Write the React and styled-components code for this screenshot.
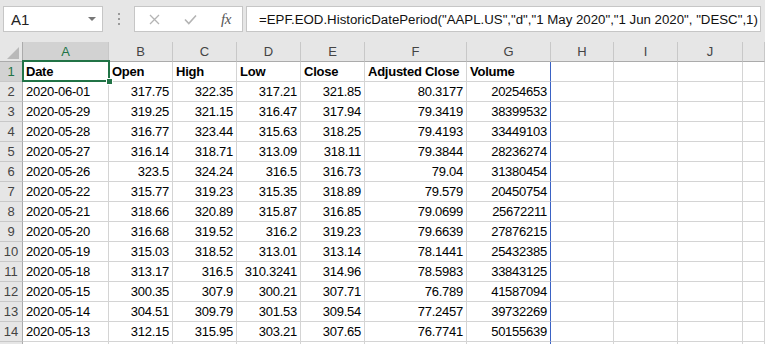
import React from "react";
import styled, { createGlobalStyle } from "styled-components";

const GlobalStyle = createGlobalStyle`
  html, body { margin: 0; padding: 0; background: #fff; overflow: hidden; }
  body { font-family: "Liberation Sans", Arial, sans-serif; }
`;

const Window = styled.div`
  width: 765px;
  height: 344px;
  overflow: hidden;
  display: flex;
  flex-direction: column;
  background: #fff;
`;

const FormulaBar = styled.div`
  flex: none;
  height: 42px;
  box-sizing: border-box;
  background: #e6e6e6;
  display: flex;
  align-items: flex-start;
  padding: 6px 4px 0 3px;
`;

const NameBox = styled.div`
  width: 100px;
  height: 26px;
  box-sizing: border-box;
  background: #fff;
  border: 1px solid #c6c6c6;
  display: flex;
  align-items: center;
  justify-content: space-between;
  padding: 0 6px 0 7px;
  font-size: 15px;
  color: #222;
`;

const DropArrow = styled.span`
  width: 0;
  height: 0;
  border-left: 4px solid transparent;
  border-right: 4px solid transparent;
  border-top: 4px solid #777;
`;

const Grip = styled.div`
  width: 31px;
  height: 26px;
  display: flex;
  flex-direction: column;
  align-items: center;
  justify-content: center;
  gap: 3px;
`;

const GripDot = styled.span`
  width: 2px;
  height: 2px;
  background: #9a9a9a;
`;

const ButtonBox = styled.div`
  width: 109px;
  height: 26px;
  box-sizing: border-box;
  background: #fff;
  border: 1px solid #c6c6c6;
  display: flex;
  align-items: center;
  padding: 0 0 0 14px;
  gap: 24px;
`;

const FxLabel = styled.span`
  font-family: "Liberation Serif", "Times New Roman", serif;
  font-style: italic;
  font-size: 15px;
  color: #555;
  letter-spacing: -0.5px;
`;

const FormulaInput = styled.div`
  flex: 1;
  margin-left: 3px;
  height: 26px;
  box-sizing: border-box;
  background: #fff;
  border: 1px solid #c6c6c6;
  display: flex;
  align-items: center;
  padding-left: 12px;
  font-size: 13.25px;
  color: #111;
  white-space: nowrap;
  overflow: hidden;
`;

const SheetArea = styled.div`
  flex: 1;
  position: relative;
  overflow: hidden;
`;

const Grid = styled.div`
  display: grid;
  grid-template-columns: 23px 86px 64px 64px 64px 64px 102px 84px 63px 64px 65px 1fr;
  grid-auto-rows: 20px;
`;

const Corner = styled.div`
  box-sizing: border-box;
  background: #e6e6e6;
  border-right: 1px solid #ababab;
  border-bottom: 1px solid #ababab;
  display: flex;
  align-items: flex-end;
  justify-content: flex-end;
  padding: 0 3px 2px 0;
`;

const CornerTriangle = styled.span`
  width: 0;
  height: 0;
  border-left: 12px solid transparent;
  border-bottom: 12px solid #b9b9b9;
`;

const ColHeader = styled.div`
  box-sizing: border-box;
  background: ${(p) => (p.$active ? "#d2d2d2" : "#e6e6e6")};
  color: ${(p) => (p.$active ? "#217346" : "#444")};
  border-right: 1px solid #c8c8c8;
  border-bottom: 1px solid #ababab;
  font-size: 13px;
  line-height: 20px;
  text-align: center;
`;

const RowHeader = styled.div`
  box-sizing: border-box;
  background: ${(p) => (p.$active ? "#d2d2d2" : "#e6e6e6")};
  color: ${(p) => (p.$active ? "#217346" : "#444")};
  border-right: 1px solid #ababab;
  border-bottom: 1px solid #c8c8c8;
  font-size: 13px;
  line-height: 20px;
  text-align: center;
`;

const Cell = styled.div`
  box-sizing: border-box;
  border-right: 1px solid ${(p) => (p.$edge ? "#3a62c4" : "#d4d4d4")};
  border-bottom: 1px solid #d4d4d4;
  font-size: 13px;
  letter-spacing: -0.25px;
  font-weight: ${(p) => (p.$bold ? 700 : 400)};
  text-align: ${(p) => (p.$num ? "right" : "left")};
  color: #000;
  padding: 0 3px;
  line-height: 20px;
  white-space: nowrap;
  overflow: hidden;
`;

const Selection = styled.div`
  position: absolute;
  left: 22px;
  top: 18px;
  width: 88px;
  height: 22px;
  box-sizing: border-box;
  border: 2px solid #217346;
  pointer-events: none;
`;

const FillHandle = styled.span`
  position: absolute;
  right: -4px;
  bottom: -4px;
  width: 5px;
  height: 5px;
  background: #217346;
  box-shadow: 0 0 0 1px #fff;
`;

const columns = ["A", "B", "C", "D", "E", "F", "G", "H", "I", "J", ""];

const header = ["Date", "Open", "High", "Low", "Close", "Adjusted Close", "Volume"];

const data = [
  ["2020-06-01", "317.75", "322.35", "317.21", "321.85", "80.3177", "20254653"],
  ["2020-05-29", "319.25", "321.15", "316.47", "317.94", "79.3419", "38399532"],
  ["2020-05-28", "316.77", "323.44", "315.63", "318.25", "79.4193", "33449103"],
  ["2020-05-27", "316.14", "318.71", "313.09", "318.11", "79.3844", "28236274"],
  ["2020-05-26", "323.5", "324.24", "316.5", "316.73", "79.04", "31380454"],
  ["2020-05-22", "315.77", "319.23", "315.35", "318.89", "79.579", "20450754"],
  ["2020-05-21", "318.66", "320.89", "315.87", "316.85", "79.0699", "25672211"],
  ["2020-05-20", "316.68", "319.52", "316.2", "319.23", "79.6639", "27876215"],
  ["2020-05-19", "315.03", "318.52", "313.01", "313.14", "78.1441", "25432385"],
  ["2020-05-18", "313.17", "316.5", "310.3241", "314.96", "78.5983", "33843125"],
  ["2020-05-15", "300.35", "307.9", "300.21", "307.71", "76.789", "41587094"],
  ["2020-05-14", "304.51", "309.79", "301.53", "309.54", "77.2457", "39732269"],
  ["2020-05-13", "312.15", "315.95", "303.21", "307.65", "76.7741", "50155639"],
];

const rows = [header, ...data, null];

function CancelIcon() {
  return (
    <svg width="11" height="11" viewBox="0 0 11 11">
      <path d="M1 1 L10 10 M10 1 L1 10" stroke="#b4b4b4" strokeWidth="1.3" fill="none" />
    </svg>
  );
}

function EnterIcon() {
  return (
    <svg width="13" height="11" viewBox="0 0 13 11">
      <path d="M1 5.5 L4.8 9.5 L12 1.5" stroke="#b4b4b4" strokeWidth="1.6" fill="none" />
    </svg>
  );
}

export default function App() {
  return (
    <Window>
      <GlobalStyle />
      <FormulaBar>
        <NameBox>
          <span>A1</span>
          <DropArrow />
        </NameBox>
        <Grip>
          <GripDot />
          <GripDot />
          <GripDot />
        </Grip>
        <ButtonBox>
          <CancelIcon />
          <EnterIcon />
          <FxLabel>fx</FxLabel>
        </ButtonBox>
        <FormulaInput>
          =EPF.EOD.HistoricDatePeriod("AAPL.US","d","1 May 2020","1 Jun 2020", "DESC",1)
        </FormulaInput>
      </FormulaBar>
      <SheetArea>
        <Grid>
          <Corner>
            <CornerTriangle />
          </Corner>
          {columns.map((c, i) => (
            <ColHeader key={i} $active={c === "A"}>
              {c}
            </ColHeader>
          ))}
          {rows.map((r, ri) => (
            <React.Fragment key={ri}>
              <RowHeader $active={ri === 0}>{r ? ri + 1 : ""}</RowHeader>
              {columns.map((c, ci) => {
                const v = r ? r[ci] : "";
                const num = ri > 0 && ci > 0 && ci < 7;
                return (
                  <Cell key={ci} $bold={ri === 0} $num={num} $edge={ci === 6}>
                    {v}
                  </Cell>
                );
              })}
            </React.Fragment>
          ))}
        </Grid>
        <Selection>
          <FillHandle />
        </Selection>
      </SheetArea>
    </Window>
  );
}
